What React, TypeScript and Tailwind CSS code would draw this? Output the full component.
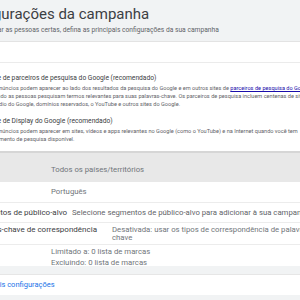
export default function App() {
  return (
    <div className="w-[300px] h-[300px] overflow-hidden bg-[#f1f3f4] font-['Roboto',sans-serif]">
      <div className="-ml-[42px] w-[342px]">
        {/* Cabeçalho */}
        <div className="h-[42px] bg-[#f1f3f4] border-b border-[#e3e3e3] pt-[5px]">
          <h1 className="text-[15px] leading-[18px] text-[#3c4043] whitespace-nowrap">
            Configurações da campanha
          </h1>
          <p className="mt-[3px] ml-[5px] text-[6.7px] leading-[9px] text-[#5f6368] whitespace-nowrap">
            Para alcançar as pessoas certas, defina as principais configurações da sua campanha
          </p>
        </div>

        {/* Redes */}
        <div className="bg-white">
          <div className="h-[21px] border-b border-[#ebebeb]" />
          <div className="pl-[30px] pt-[10px] pb-[8px] border-b-2 border-[#d6d6d6] whitespace-nowrap">
            <div className="-ml-[2px] text-[6.7px] leading-[10px] text-[#3c4043]">
              Rede de parceiros de pesquisa do Google (recomendado)
            </div>
            <div className="mt-[1px] text-[5.6px] leading-[8px] text-[#5f6368]">
              <div>
                Os anúncios podem aparecer ao lado dos resultados da pesquisa do Google e em outros sites de{" "}
                <span className="text-[#1a0dab] underline">parceiros de pesquisa do Google</span>
              </div>
              <div>
                quando as pessoas pesquisam termos relevantes para suas palavras-chave. Os parceiros de pesquisa incluem centenas de sites
              </div>
              <div>Estúdio do Google, domínios reservados, o YouTube e outros sites do Google.</div>
            </div>
            <div className="mt-[8px] -ml-[2px] text-[6.7px] leading-[10px] text-[#3c4043]">
              Rede de Display do Google (recomendado)
            </div>
            <div className="mt-[1px] text-[5.6px] leading-[8px] text-[#5f6368]">
              <div>
                Os anúncios podem aparecer em sites, vídeos e apps relevantes no Google (como o YouTube) e na Internet quando você tem
              </div>
              <div>orçamento de pesquisa disponível.</div>
            </div>
          </div>
        </div>

        {/* Linhas de configuração */}
        <div className="bg-white text-[7.75px] whitespace-nowrap">
          <div className="flex items-center h-[29px] bg-[#e8e8e8] pt-[4px]">
            <div className="w-[93px] shrink-0 pl-[13px] text-[8px] text-[#3c4043]">Locais</div>
            <div className="text-[#70757a]">Todos os países/territórios</div>
          </div>
          <div className="flex items-center h-[21px] border-b border-[#ececec]">
            <div className="w-[93px] shrink-0 pl-[13px] text-[8px] text-[#3c4043]">Idiomas</div>
            <div className="text-[#70757a]">Português</div>
          </div>
          <div className="flex items-center h-[20px] border-b border-[#ececec]">
            <div className="w-[114px] shrink-0 pl-[13px] text-[8px] text-[#3c4043]">Segmentos de público-alvo</div>
            <div className="text-[#5f6368]">Selecione segmentos de público-alvo para adicionar à sua campanha</div>
          </div>
          <div className="flex items-start h-[22px] pt-[3px] border-b border-[#ececec]">
            <div className="w-[154px] shrink-0 pl-[13px] text-[8px] text-[#3c4043] leading-[8px]">
              Palavras-chave de correspondência
            </div>
            <div className="text-[#70757a] leading-[8px]">
              Desativada: usar os tipos de correspondência de palavras-
              <br />
              chave
            </div>
          </div>
          <div className="flex h-[21px] pt-[1px]">
            <div className="w-[93px] shrink-0 pl-[13px] text-[8px] text-[#3c4043] leading-[11px]">Marcas</div>
            <div className="text-[#70757a] leading-[11px]">
              <div>Limitado a: 0 lista de marcas</div>
              <div>Excluindo: 0 lista de marcas</div>
            </div>
          </div>
        </div>

        <div className="h-[9px] bg-[#f1f3f4] border-b border-[#e6e6e6]" />

        <div className="bg-white h-[20px] flex items-center pl-[31px]">
          <span className="text-[7.5px] text-[#1a73e8] whitespace-nowrap">Mais configurações</span>
        </div>

        <div className="h-[8px] bg-[#f1f3f4]" />
      </div>
    </div>
  );
}
